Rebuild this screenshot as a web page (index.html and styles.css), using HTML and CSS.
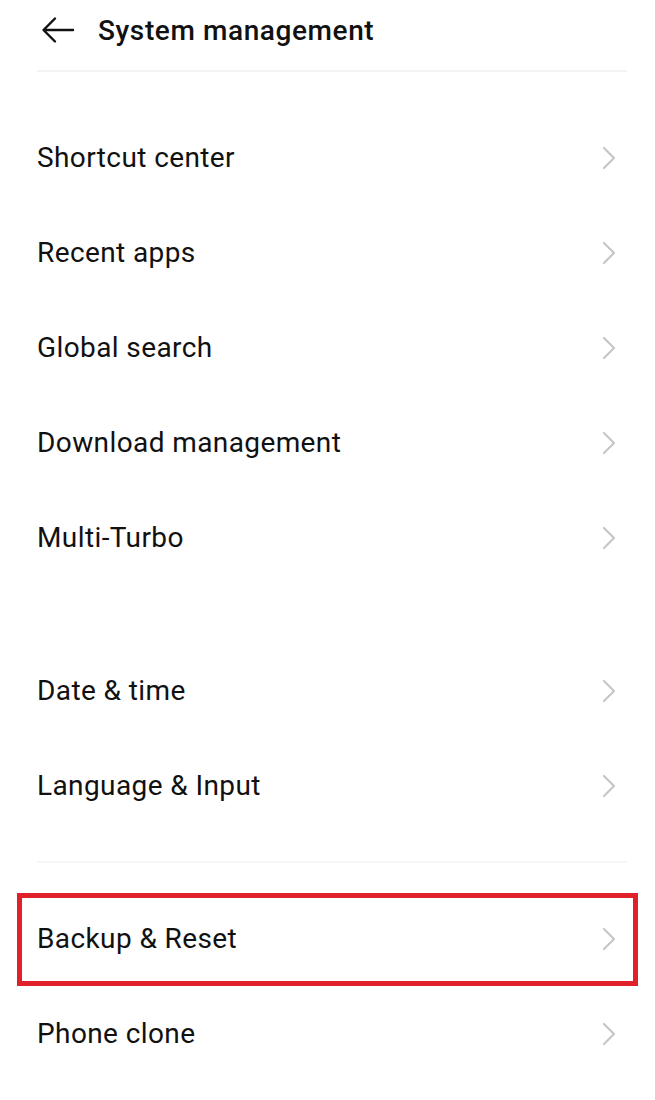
FILE: index.html
```html
<!DOCTYPE html>
<html lang="en">
<head>
<meta charset="utf-8">
<title>System management</title>
<link rel="stylesheet" href="styles.css">
</head>
<body>
<div class="screen">
  <header class="topbar">
    <svg class="back" width="34" height="28" viewBox="0 0 34 28" aria-hidden="true">
      <path d="M32 14H3M14 2.5L2.5 14L14 25.5" fill="none" stroke="#111" stroke-width="2.4" stroke-linecap="round" stroke-linejoin="round"/>
    </svg>
    <h1 class="title">System management</h1>
  </header>

  <section class="group group-first">
    <div class="row"><span class="label">Shortcut center</span><svg class="chev" width="14" height="24" viewBox="0 0 14 24"><path d="M2 2L12 12L2 22" fill="none" stroke="#c6c6c6" stroke-width="2.2" stroke-linecap="round" stroke-linejoin="round"/></svg></div>
    <div class="row"><span class="label">Recent apps</span><svg class="chev" width="14" height="24" viewBox="0 0 14 24"><path d="M2 2L12 12L2 22" fill="none" stroke="#c6c6c6" stroke-width="2.2" stroke-linecap="round" stroke-linejoin="round"/></svg></div>
    <div class="row"><span class="label">Global search</span><svg class="chev" width="14" height="24" viewBox="0 0 14 24"><path d="M2 2L12 12L2 22" fill="none" stroke="#c6c6c6" stroke-width="2.2" stroke-linecap="round" stroke-linejoin="round"/></svg></div>
    <div class="row"><span class="label">Download management</span><svg class="chev" width="14" height="24" viewBox="0 0 14 24"><path d="M2 2L12 12L2 22" fill="none" stroke="#c6c6c6" stroke-width="2.2" stroke-linecap="round" stroke-linejoin="round"/></svg></div>
    <div class="row"><span class="label">Multi-Turbo</span><svg class="chev" width="14" height="24" viewBox="0 0 14 24"><path d="M2 2L12 12L2 22" fill="none" stroke="#c6c6c6" stroke-width="2.2" stroke-linecap="round" stroke-linejoin="round"/></svg></div>
  </section>

  <section class="group group-second">
    <div class="row"><span class="label">Date &amp; time</span><svg class="chev" width="14" height="24" viewBox="0 0 14 24"><path d="M2 2L12 12L2 22" fill="none" stroke="#c6c6c6" stroke-width="2.2" stroke-linecap="round" stroke-linejoin="round"/></svg></div>
    <div class="row"><span class="label">Language &amp; Input</span><svg class="chev" width="14" height="24" viewBox="0 0 14 24"><path d="M2 2L12 12L2 22" fill="none" stroke="#c6c6c6" stroke-width="2.2" stroke-linecap="round" stroke-linejoin="round"/></svg></div>
  </section>

  <div class="divider"></div>

  <section class="group group-third">
    <div class="row highlight"><span class="label">Backup &amp; Reset</span><svg class="chev" width="14" height="24" viewBox="0 0 14 24"><path d="M2 2L12 12L2 22" fill="none" stroke="#c6c6c6" stroke-width="2.2" stroke-linecap="round" stroke-linejoin="round"/></svg></div>
    <div class="row"><span class="label">Phone clone</span><svg class="chev" width="14" height="24" viewBox="0 0 14 24"><path d="M2 2L12 12L2 22" fill="none" stroke="#c6c6c6" stroke-width="2.2" stroke-linecap="round" stroke-linejoin="round"/></svg></div>
  </section>
</div>
</body>
</html>
```

FILE: styles.css
```css
* { box-sizing: border-box; }

html, body {
  margin: 0;
  padding: 0;
  background: #ffffff;
}

body {
  font-family: Roboto, "Liberation Sans", Arial, sans-serif;
  color: #111111;
}

.screen {
  width: 655px;
  min-height: 1100px;
  background: #ffffff;
}

.topbar {
  height: 72px;
  display: flex;
  align-items: center;
  gap: 23px;
  padding: 0 0 12px 41px;
  margin: 0 28px 0 0;
  position: relative;
}

.topbar::after {
  content: "";
  position: absolute;
  left: 37px;
  right: 0;
  bottom: 0;
  height: 2px;
  background: #f3f3f3;
}

.back {
  display: block;
  flex: none;
}

.title {
  margin: 0;
  font-size: 28px;
  font-weight: 500;
  color: #111111;
  letter-spacing: 0.6px;
}

.group-first {
  padding-top: 38px;
}

.group-second {
  padding-top: 58px;
}

.row {
  height: 95px;
  display: flex;
  align-items: center;
  justify-content: space-between;
  padding: 0 39px 0 37px;
  position: relative;
}

.label {
  font-size: 28px;
  font-weight: 400;
  color: #111111;
  letter-spacing: 0.4px;
}

.chev {
  display: block;
  flex: none;
}

.divider {
  height: 2px;
  margin: 28px 28px 28px 37px;
  background: #f5f5f5;
}

.highlight::after {
  content: "";
  position: absolute;
  left: 17px;
  right: 17px;
  top: 2px;
  bottom: 0;
  border: 5px solid #e0212b;
  pointer-events: none;
}
```
